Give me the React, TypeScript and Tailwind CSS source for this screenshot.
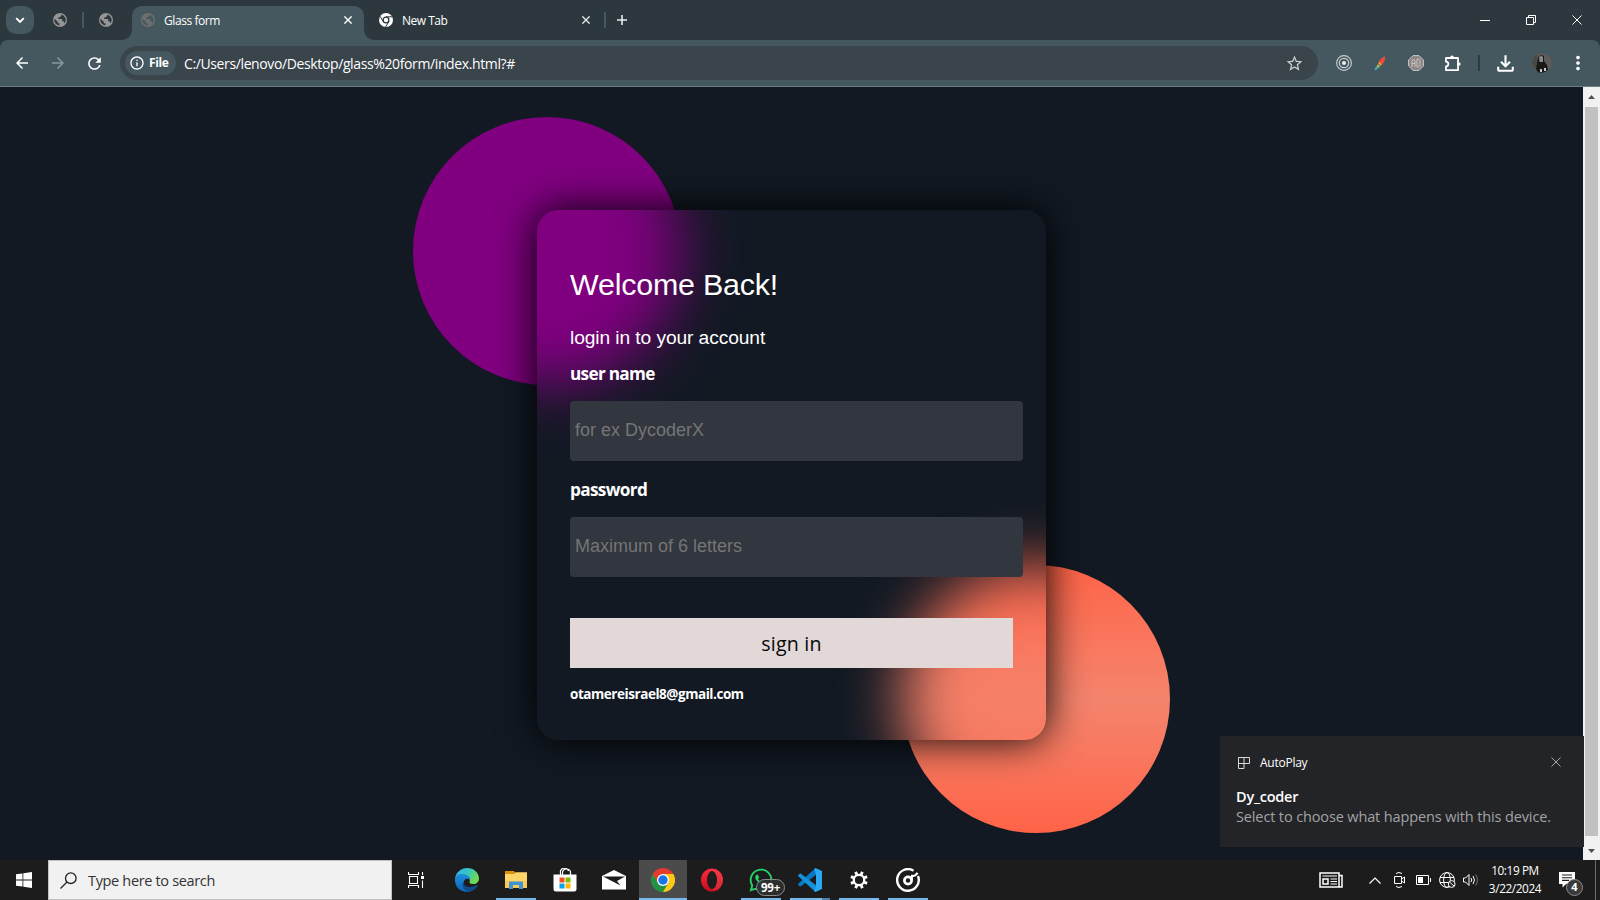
import React from "react";
import {
  MdArrowBack,
  MdArrowForward,
  MdRefresh,
  MdStarOutline,
  MdOutlineFileDownload,
  MdInfoOutline,
  MdMoreVert,
} from "react-icons/md";
import { FaWhatsapp } from "react-icons/fa";

const ui = "font-['Open_Sans','Noto_Sans',sans-serif]";
const arial = "font-['Liberation_Sans',Arial,sans-serif]";

function Cross({ size, stroke, width }: { size: number; stroke: string; width: number }) {
  return (
    <svg width={size} height={size} viewBox="0 0 10 10" fill="none" stroke={stroke} strokeWidth={width}>
      <path d="M.5 .5 9.5 9.5M9.5 .5 .5 9.5" />
    </svg>
  );
}

function Globe({ className, disc, land }: { className: string; disc: string; land: string }) {
  return (
    <svg className={className} width="14" height="14" viewBox="0 0 14 14">
      <circle cx="7" cy="7" r="7" fill={disc} />
      <path
        d="M1.400 5.800 4.800 8.800V10.200H6.500V12.600A5.700 5.700 0 0 1 1.400 5.800ZM8.300 1.500V2.800L6.800 4.300H5.300V6H9.200V8.200H10.500L11.700 10.200A5.700 5.700 0 0 0 8.300 1.500Z"
        fill={land}
      />
    </svg>
  );
}

function ChromeMono() {
  return (
    <svg width="14" height="14" viewBox="0 0 14 14">
      <circle cx="7" cy="7" r="7" fill="#fff" />
      <circle cx="7" cy="7" r="3.5" fill="#2d383e" />
      <circle cx="7" cy="7" r="2.2" fill="#fff" />
      <path d="M7 3.8H13.3M4.2 8.6 1 3.2M9.8 8.6 6.6 14" stroke="#2d383e" strokeWidth="1" />
    </svg>
  );
}

function TabStrip() {
  return (
    <div className="flex h-10 items-center bg-[#2d383e] pl-1.5">
      <div className="flex h-7 w-7 items-center justify-center rounded-[10px] bg-[#455860]">
        <svg width="10" height="7" viewBox="0 0 10 7" fill="none" stroke="#fff" strokeWidth="1.9">
          <path d="M1.2 1.2 5 5 8.8 1.2" />
        </svg>
      </div>
      <Globe className="ml-[19px]" disc="#959595" land="#2d383e" />
      <div className="ml-[15px] h-4 w-[2px] bg-[#455860]" />
      <Globe className="ml-[15px]" disc="#959595" land="#2d383e" />
      <div className="relative ml-[19px] flex h-[34px] w-[232px] items-center self-end rounded-t-[10px] bg-[#455860] pl-[9px]">
        <svg className="absolute bottom-0 -left-[10px]" width="10" height="10" viewBox="0 0 10 10">
          <path d="M10 0V10H0A10 10 0 0 0 10 0" fill="#455860" />
        </svg>
        <svg className="absolute -right-[10px] bottom-0" width="10" height="10" viewBox="0 0 10 10">
          <path d="M0 0V10H10A10 10 0 0 1 0 0" fill="#455860" />
        </svg>
        <Globe className="-mt-[6px]" disc="#6c6e70" land="#455860" />
        <span className={`${ui} -mt-[5px] ml-[9px] w-[180px] text-[12px] tracking-[-0.42px] text-white`}>Glass form</span>
        <span className="-mt-[6px]">
          <Cross size={8} stroke="#fff" width={1.7} />
        </span>
      </div>
      <div className="ml-[15px] flex w-[211px] items-center">
        <ChromeMono />
        <span className={`${ui} mt-[2px] ml-[9px] w-[180px] text-[12px] tracking-[-0.5px] text-white`}>New Tab</span>
        <Cross size={8} stroke="#e4e8ea" width={1.7} />
      </div>
      <div className="ml-[14px] h-4 w-[2px] bg-[#455860]" />
      <svg className="ml-[11px]" width="10" height="10" viewBox="0 0 10 10" stroke="#e8ecee" strokeWidth="1.6">
        <path d="M5 0V10M0 5H10" />
      </svg>
      <div className="ml-auto flex items-center gap-9 pr-[18px]">
        <div className="h-px w-[10px] bg-white" />
        <svg width="10" height="10" viewBox="0 0 10 10" fill="none" stroke="#fff">
          <path d="M.5 2.5H7.5V9.5H.5ZM2.5 2V.5H9.5V7.5H8" />
        </svg>
        <Cross size={10} stroke="#fff" width={1} />
      </div>
    </div>
  );
}

function Toolbar() {
  return (
    <div className="h-[47px] bg-[#2d383e]">
      <div className="flex h-[47px] items-center rounded-t-[8px] border-b border-[#6f7e85] bg-[#455860] pl-[13px]">
        <MdArrowBack className="text-white" size={18} />
        <MdArrowForward className="ml-[18px] text-[#8b979d]" size={18} />
        <MdRefresh className="ml-[18px] text-white" size={19} />
        <div className="ml-[16px] flex h-[34px] w-[1198px] items-center rounded-full bg-[#39444b] pl-[5px]">
          <div className="flex h-6 w-[51px] items-center rounded-full bg-[#455860] pl-1">
            <MdInfoOutline className="text-white" size={16} />
            <span className={`${ui} ml-[4px] text-[12px] font-bold tracking-[-0.4px] text-white`}>File</span>
          </div>
          <span className={`${ui} ml-2 text-[14px] tracking-[-0.38px] text-white`}>
            C:/Users/lenovo/Desktop/glass%20form/index.html?#
          </span>
          <MdStarOutline className="mr-[14px] ml-auto text-[#c8cdd0]" size={19} />
        </div>
        <svg className="ml-[18px]" width="16" height="16" viewBox="0 0 16 16" fill="none" stroke="#c9cfd2">
          <circle cx="8" cy="8" r="7.4" strokeWidth="1.1" />
          <circle cx="8" cy="8" r="4.7" strokeWidth="1.2" />
          <circle cx="8" cy="8" r="2.1" fill="#e8ecee" stroke="none" />
        </svg>
        <svg className="ml-[22px]" width="12" height="15" viewBox="0 0 12 15">
          <path d="M4.500 7.500C5 4 8 1 11 .5C11.500 4 9.500 8 6.500 9.500Z" fill="#ee4a3a" />
          <path d="M4.500 7.500 6.500 9.500 7.800 8.600 5 5.500Z" fill="#f7a23b" />
          <path d="M4 8 6.300 10.200 4.500 12 2.500 10.500Z" fill="#a7b84c" />
          <path d="M2.500 10.500 4.300 12.200 1 14.500.8 12.500Z" fill="#3bb3c8" />
        </svg>
        <svg className="ml-[22px]" width="16" height="16" viewBox="0 0 16 16" fill="none">
          <path d="M5 .6H11L15.400 5V11L11 15.400H5L.6 11V5Z" fill="#8c8583" stroke="#c6c6c6" />
          <path d="M4 12V6L5.500 4 7 6V12M4 8.500H7M9 4V12H10.500L12 10.500V5.500L10.500 4Z" stroke="#c8c6c5" strokeWidth="1" />
        </svg>
        <svg className="ml-[20px]" width="18" height="17" viewBox="0 0 18 17">
          <path
            d="M2 3H14V15.200H2V11.500Q4.400 11.300 4.400 9.100T2 6.700Z"
            fill="none"
            stroke="#fff"
            strokeWidth="1.8"
            strokeLinejoin="round"
          />
          <circle cx="8" cy="2.400" r="1.800" fill="#fff" />
          <circle cx="14.800" cy="9" r="1.800" fill="#fff" />
        </svg>
        <div className="ml-[16px] h-4 w-[2px] bg-[#2f3b41]" />
        <MdOutlineFileDownload className="ml-[13px] text-white" size={25} />
        <svg className="ml-[14px]" width="20" height="20" viewBox="0 0 20 20">
          <circle cx="10" cy="10" r="9.800" fill="#5f5b59" />
          <path d="M0 10A10 10 0 0 1 5 1.500V17A10 10 0 0 1 0 10" fill="#4c4846" />
          <path d="M6 4Q8.500 1 12 3V8L15 12 16 17 12 19.500H6L4 16 5 10Z" fill="#191919" />
          <path d="M7 4Q9 2 11 4L11 9 7.500 9Z" fill="#8a8a8a" />
          <path d="M8 16H10V19H8ZM12 15H14V18H12Z" fill="#c8c8c8" />
        </svg>
        <MdMoreVert className="ml-[15px] text-white" size={22} />
      </div>
    </div>
  );
}

function Glass() {
  return (
    <div className="absolute inset-0 overflow-hidden rounded-[21px] bg-[#121923]">
      <div className="absolute -top-[93px] -left-[124px] h-[268px] w-[268px] rounded-full bg-[#800080] blur-[30px]" />
      <div className="absolute top-[355px] left-[365px] h-[268px] w-[268px] rounded-full bg-linear-to-b from-[#ff6347] via-[#f4846d] to-[#ff6347] blur-[30px]" />
    </div>
  );
}

function LoginCard() {
  return (
    <form
      onSubmit={(e) => e.preventDefault()}
      className="relative h-[530px] w-[509px] rounded-[21px] text-white shadow-[0_0_40px_#000000]"
    >
      <Glass />
      <div className="relative flex h-full flex-col pl-[33px]">
        <h1 className={`${arial} mt-[56px] h-9 text-[30.4px] leading-9 tracking-[-0.2px] whitespace-nowrap`}>Welcome Back!</h1>
        <p className={`${arial} mt-[24px] h-6 text-[19.2px] leading-6 tracking-[-0.09px]`}>login in to your account</p>
        <label className={`${ui} mt-[12px] h-6 text-[17.2px] leading-6 font-bold tracking-[-0.7px]`}>user name</label>
        <input
          placeholder="for ex DycoderX"
          className={`${arial} mt-[15px] h-[60px] w-[453px] shrink-0 rounded-[4px] bg-[#32363e] px-[5px] pb-[2px] text-[18px] placeholder:text-[#757575]`}
        />
        <label className={`${ui} mt-[17px] h-6 text-[17.2px] leading-6 font-bold tracking-[-0.65px]`}>password</label>
        <input
          placeholder="Maximum of 6 letters"
          className={`${arial} mt-[15px] h-[60px] w-[453px] shrink-0 rounded-[4px] bg-[#32363e] px-[5px] pb-[2px] text-[18px] placeholder:text-[#757575]`}
        />
        <button className={`${ui} mt-[41px] h-[50px] w-[443px] shrink-0 bg-[#e1d8d7] pt-[2px] text-[19.6px] tracking-[0.22px] text-[#080808]`}>
          sign in
        </button>
        <p className={`${ui} mt-[16px] text-[13.5px] leading-5 font-bold tracking-[-0.45px]`}>otamereisrael8@gmail.com</p>
      </div>
    </form>
  );
}

function Scrollbar() {
  return (
    <div className="flex w-[17px] flex-col items-center bg-[#f1f1f1]">
      <div className="flex h-[20px] items-center">
        <svg width="7" height="4" viewBox="0 0 7 4">
          <path d="M3.500 0 7 4H0Z" fill="#505050" />
        </svg>
      </div>
      <div className="w-[13px] flex-1 bg-[#c1c1c1]" />
      <div className="flex h-6 items-start pt-[13px]">
        <svg width="7" height="4" viewBox="0 0 7 4">
          <path d="M0 0H7L3.500 4Z" fill="#505050" />
        </svg>
      </div>
    </div>
  );
}

function Toast() {
  return (
    <div className={`${ui} absolute top-[649px] left-[1220px] h-[111px] w-[364px] bg-[#232427] pl-4`}>
      <div className="flex h-[53px] items-center pl-[2px]">
        <svg width="12" height="12" viewBox="0 0 12 12" fill="none" stroke="#d8d8d8">
          <path d="M.5 .5H11.500V6.500H.5ZM.5 .5V11.500H6V.5" />
        </svg>
        <span className="ml-[10px] w-[280px] text-[12px] tracking-[-0.25px] text-white">AutoPlay</span>
        <span className="-mt-[2px] ml-[11px]">
          <Cross size={10} stroke="#a8a8a8" width={1} />
        </span>
      </div>
      <div className="-mt-[2px] text-[14.5px] leading-[20px] font-semibold tracking-[-0.25px] text-white">Dy_coder</div>
      <div className="text-[14.5px] leading-[20px] tracking-[-0.13px] whitespace-nowrap text-[#a2a3a4]">
        Select to choose what happens with this device.
      </div>
    </div>
  );
}

const EdgeIcon = () => (
  <svg width="24" height="24" viewBox="0 0 24 24">
    <defs>
      <linearGradient id="eg" x1="0" y1="0" x2="1" y2=".5">
        <stop offset="0" stopColor="#2fb5e8" />
        <stop offset=".5" stopColor="#35c4c8" />
        <stop offset="1" stopColor="#6fdc4f" />
      </linearGradient>
      <linearGradient id="eb" x1="0" y1="0" x2="0" y2="1">
        <stop offset="0" stopColor="#1c8fdc" />
        <stop offset="1" stopColor="#0d62b4" />
      </linearGradient>
    </defs>
    <path d="M0 11C1 4 6 0 12 0C19 0 24 5 24 10.500C24 14 21.500 16 18.500 16C15.500 16 14 15 14.500 14C15.500 12 15 8 10 7.500C5 7 1 9 0 11" fill="url(#eg)" />
    <path d="M0 12C0 7 4 5.500 8 6C13 6.500 15.500 9.500 15 12C13 9.500 9 10.500 8.500 14.500C8 19 12 23 17 22.500C15 24 12 24 11 23.900C5 23.500 0 19 0 12" fill="url(#eb)" />
    <path d="M8.500 14C8.500 19 14 20.500 21.500 17.200C22.500 16.800 23 17.500 22.500 18.200C20.500 21.500 17 23.500 13.500 23.800C9 22.500 6 17.500 8.500 14" fill="#114a8b" />
  </svg>
);

const ExplorerIcon = () => (
  <svg width="22" height="18" viewBox="0 0 22 18">
    <path d="M0 0H9L10 1.500V5H0Z" fill="#d8920b" />
    <path d="M0 3H9L10.500 1.200H22V17H0Z" fill="#fdd468" />
    <path d="M0 10H22V17H0Z" fill="#fcca50" />
    <path d="M4 18V10.500H18V18H14V14H8V18Z" fill="#3d94d6" />
  </svg>
);

const StoreIcon = () => (
  <svg width="24" height="24" viewBox="0 0 24 24">
    <path d="M7.500 7V4.500A4 3.500 0 0 1 15.500 3M9.500 7V4.500A4 3.500 0 0 1 17.500 4.500V7" fill="none" stroke="#fff" strokeWidth="1.200" />
    <path d="M.5 6.500H23.500V21Q23.500 23.500 21 23.500H3Q.5 23.500 .5 21Z" fill="#fff" />
    <path d="M6.500 9.500H11.500V14.500H6.500Z" fill="#f25022" />
    <path d="M12.500 9.500H17.500V14.500H12.500Z" fill="#7fba00" />
    <path d="M6.500 15.500H11.500V20.500H6.500Z" fill="#00a4ef" />
    <path d="M12.500 15.500H17.500V20.500H12.500Z" fill="#ffb900" />
  </svg>
);

const MailIcon = () => (
  <svg width="24" height="20" viewBox="0 0 24 20">
    <path d="M0 6 12 0 24 6V19.500H0Z" fill="#fff" />
    <path d="M1 6.500 23 6.500 15 11 18.500 15.500Z" fill="#1d1d1d" />
  </svg>
);

const ChromeIcon = () => (
  <svg width="24" height="24" viewBox="0 0 24 24">
    <path d="M12 12V6H22.400A12 12 0 0 1 12 24Z" fill="#fdc716" />
    <path d="M1.600 6A12 12 0 0 0 12 24L17.200 15 12 12Z" fill="#229342" />
    <path d="M1.600 6A12 12 0 0 1 22.400 6H12L7 10 6.800 15Z" fill="#e33b2e" />
    <path d="M1.600 6 6.800 15 6 16Z" fill="#229342" />
    <circle cx="12" cy="12" r="6" fill="#fff" />
    <circle cx="12" cy="12" r="4.700" fill="#1a73e8" />
  </svg>
);

const OperaIcon = () => (
  <svg width="22" height="24" viewBox="0 0 22 24">
    <defs>
      <linearGradient id="op" x1="0" y1="0" x2="0" y2="1">
        <stop offset="0" stopColor="#ff2b3c" />
        <stop offset="1" stopColor="#c50d1d" />
      </linearGradient>
    </defs>
    <ellipse cx="11" cy="12" rx="11" ry="11.500" fill="url(#op)" />
    <path d="M11 2.500C16 .5 22 5 22 12S16 23.500 11 21.500C14 20 16 17 16 12S14 4 11 2.500" fill="#e8616a" opacity=".3" />
    <ellipse cx="11" cy="12" rx="5" ry="9" fill="#1d1d1d" />
  </svg>
);

const WhatsAppIcon = () => (
  <div className="relative">
    <FaWhatsapp size={26} className="text-[#25d366]" />
    <div className={`${ui} absolute top-[12px] left-[8px] flex h-[17px] w-[29px] items-center justify-center rounded-full border border-[#8a8a8a] bg-[#303030]/90 text-[11.5px] font-bold tracking-[-0.2px] text-white`}>
      99+
    </div>
  </div>
);

const CodeIcon = () => (
  <svg width="24" height="24" viewBox="0 0 24 24">
    <path d="M17.500 0 18 6.800 3 18.300Q2 18.800 1.300 18L.3 17Q-.3 16.300 .5 15.600Z" fill="#0879c4" />
    <path d="M17.500 24 18 17.200 3 5.700Q2 5.200 1.300 6L.3 7Q-.3 7.700 .5 8.400Z" fill="#1590db" />
    <path d="M17.500 0 24 3V21L17.500 24Q16.500 24 16.500 22.500L18 17V7L16.500 1.500Q16.500 0 17.500 0" fill="#2ba8f2" />
  </svg>
);

const GearIcon = () => (
  <svg width="18" height="18" viewBox="0 0 18 18" fill="none" stroke="#fff">
    <circle cx="9" cy="9" r="5.200" strokeWidth="2.200" />
    <path
      d="M6.900 3.900 5.600 .9M11.100 3.900 12.400 .9M14.100 6.900 17.100 5.600M14.100 11.100 17.100 12.400M11.100 14.100 12.400 17.100M6.900 14.100 5.600 17.100M3.900 11.100 .9 12.400M3.900 6.900 .9 5.600"
      strokeWidth="2.800"
    />
  </svg>
);

const GrooveIcon = () => (
  <svg width="24" height="24" viewBox="0 0 24 24" fill="none" stroke="#fff">
    <path d="M17.500 2.700A10.800 10.800 0 1 0 22 8" strokeWidth="2.400" />
    <circle cx="12" cy="12.500" r="3.600" strokeWidth="2.700" />
    <path d="M15.900 12V6.800" strokeWidth="2" />
    <path d="M15 8.300Q19.500 8.500 21.500 4.800" strokeWidth="2.300" />
  </svg>
);

type TaskApp = { icon: React.ReactNode; bar: boolean; active?: boolean; stacked?: boolean };

const apps: TaskApp[] = [
  { icon: <EdgeIcon />, bar: false },
  { icon: <ExplorerIcon />, bar: true },
  { icon: <StoreIcon />, bar: false },
  { icon: <MailIcon />, bar: false },
  { icon: <ChromeIcon />, bar: true, active: true },
  { icon: <OperaIcon />, bar: false },
  { icon: <WhatsAppIcon />, bar: true },
  { icon: <CodeIcon />, bar: true, stacked: true },
  { icon: <GearIcon />, bar: true },
  { icon: <GrooveIcon />, bar: true },
];

function Tray() {
  return (
    <div className="ml-auto flex h-10 items-center">
      <svg width="24" height="16" viewBox="0 0 24 16" fill="none" stroke="#fff">
        <path d="M1 1H20V15H1ZM20 3.500H23V15H19" strokeWidth="1.500" />
        <path d="M4 7H9V12H4Z" strokeWidth="1.500" />
        <path d="M3.500 4H18M11.500 7H18M11.500 9.500H18M11.500 12H18" strokeWidth="1.200" />
      </svg>
      <svg className="ml-[26px]" width="12" height="7" viewBox="0 0 12 7" fill="none" stroke="#fff" strokeWidth="1.200">
        <path d="M.5 6.500 6 1 11.500 6.500" />
      </svg>
      <svg className="ml-[13px]" width="11" height="16" viewBox="0 0 11 16" fill="none" stroke="#fff">
        <path d="M.5 4.500H7.500V11.500H.5ZM7.500 7 10.500 5V11L7.500 9M2 1.500Q5 -.5 8 1.500M2 14.500Q5 16.500 8 14.500" />
      </svg>
      <svg className="ml-[11px]" width="15" height="10" viewBox="0 0 15 10" fill="none" stroke="#fff">
        <path d="M.5 .5H12.500V9.500H.5ZM14.500 3V7" />
        <path d="M2 2H7V8H2Z" fill="#fff" stroke="none" />
      </svg>
      <svg className="ml-[8px]" width="17" height="16" viewBox="0 0 17 16" fill="none" stroke="#fff">
        <circle cx="8" cy="8" r="7.400" />
        <ellipse cx="8" cy="8" rx="3.400" ry="7.400" />
        <path d="M1 5.500H15M1 10.500H15" />
        <circle cx="12.700" cy="12" r="3.400" fill="#1c1c1c" />
        <path d="M10.500 10 15 14" />
      </svg>
      <svg className="ml-[7px]" width="16" height="14" viewBox="0 0 16 14" fill="none" stroke="#fff">
        <path d="M.5 5H2.500L6 1.500V12.500L2.500 9H.5Z" />
        <path d="M8 5Q9.500 7 8 9M10 3Q13 7 10 11" />
        <path d="M12.500 1.500Q16.500 7 12.500 12.500" stroke="#777" />
      </svg>
      <div className={`${ui} -mt-[2px] ml-[6px] w-[60px] text-center text-[11.8px] leading-[18px] tracking-[-0.4px] text-white`}>
        <div>10:19 PM</div>
        <div>3/22/2024</div>
      </div>
      <div className="relative mt-[8px] ml-[14px] h-6 w-[24px]">
        <svg width="16" height="16" viewBox="0 0 16 16">
          <path d="M0 0H16V12H7L3.500 15.500V12H0Z" fill="#fff" />
          <path d="M3 3H13M3 5.700H13M3 8.400H10" stroke="#1c1c1c" strokeWidth="1.100" />
        </svg>
        <div className={`${ui} absolute top-[7px] left-[7px] flex h-[17px] w-[17px] items-center justify-center rounded-full border border-[#8c8c8c] bg-[#3a3a3a] text-[11px] font-bold text-white`}>
          4
        </div>
      </div>
      <div className="ml-3 h-10 w-px bg-[#6c6c6c]" />
      <div className="w-1" />
    </div>
  );
}

function Taskbar() {
  return (
    <div className="flex h-10 bg-[#1c1c1c]">
      <div className="flex w-12 items-center justify-center">
        <svg width="16" height="16" viewBox="0 0 16 16" fill="#fff">
          <path d="M0 2.300 6.500 1.400V7.600H0ZM7.300 1.200 16 0V7.600H7.300ZM0 8.400H6.500V14.600L0 13.700ZM7.300 8.400H16V16L7.300 14.800Z" />
        </svg>
      </div>
      <div className="flex h-10 w-[344px] items-center border border-[#c0c0c0] bg-[#f1f1f1] pl-[11px]">
        <svg width="17" height="17" viewBox="0 0 17 17" fill="none" stroke="#222" strokeWidth="1.300">
          <circle cx="10.800" cy="6.200" r="5.300" />
          <path d="M7 10 .5 16.500" />
        </svg>
        <span className={`${ui} ml-[11px] mt-px text-[14.5px] tracking-[-0.34px] text-[#333]`}>Type here to search</span>
      </div>
      <div className="flex w-[51px] items-center pl-4">
        <svg width="17" height="16" viewBox="0 0 17 16" fill="none" stroke="#fff" strokeWidth="1.100">
          <path d="M1.500 4.500H9.500V11.500H1.500ZM.5 0V2.500H10.500V0M.5 16V13.500H10.500V16M14.500 0V3M14.500 8.500V16" />
          <path d="M13 4H16V7H13Z" fill="#fff" stroke="none" />
        </svg>
      </div>
      <div className="flex gap-px">
        {apps.map((app, i) => (
          <div key={i} className={`flex h-10 w-12 flex-col items-center ${app.active ? "bg-[#4b4b4b]" : ""}`}>
            <div className="flex h-[38px] items-center pt-[2px]">{app.icon}</div>
            {app.bar && (
              <div className={`flex h-[2px] bg-[#76b9ed] ${app.active ? "w-12" : "w-10"}`}>
                {app.stacked && <div className="ml-auto h-[2px] w-2 bg-[#4f7ea6]" />}
              </div>
            )}
          </div>
        ))}
      </div>
      <Tray />
    </div>
  );
}

export default function App() {
  return (
    <div className="flex h-[900px] w-[1600px] flex-col overflow-hidden bg-[#121923]">
      <TabStrip />
      <Toolbar />
      <div className="relative flex h-[773px]">
        <main className="relative flex w-[1583px] justify-center overflow-hidden bg-[#121923] pt-[123px]">
          <div className="absolute top-[30px] left-[413px] h-[268px] w-[268px] rounded-full bg-[#800080]" />
          <div className="absolute top-[478px] left-[902px] h-[268px] w-[268px] rounded-full bg-linear-to-b from-[#ff6347] via-[#f4846d] to-[#ff6347]" />
          <LoginCard />
        </main>
        <Scrollbar />
        <Toast />
      </div>
      <Taskbar />
    </div>
  );
}
